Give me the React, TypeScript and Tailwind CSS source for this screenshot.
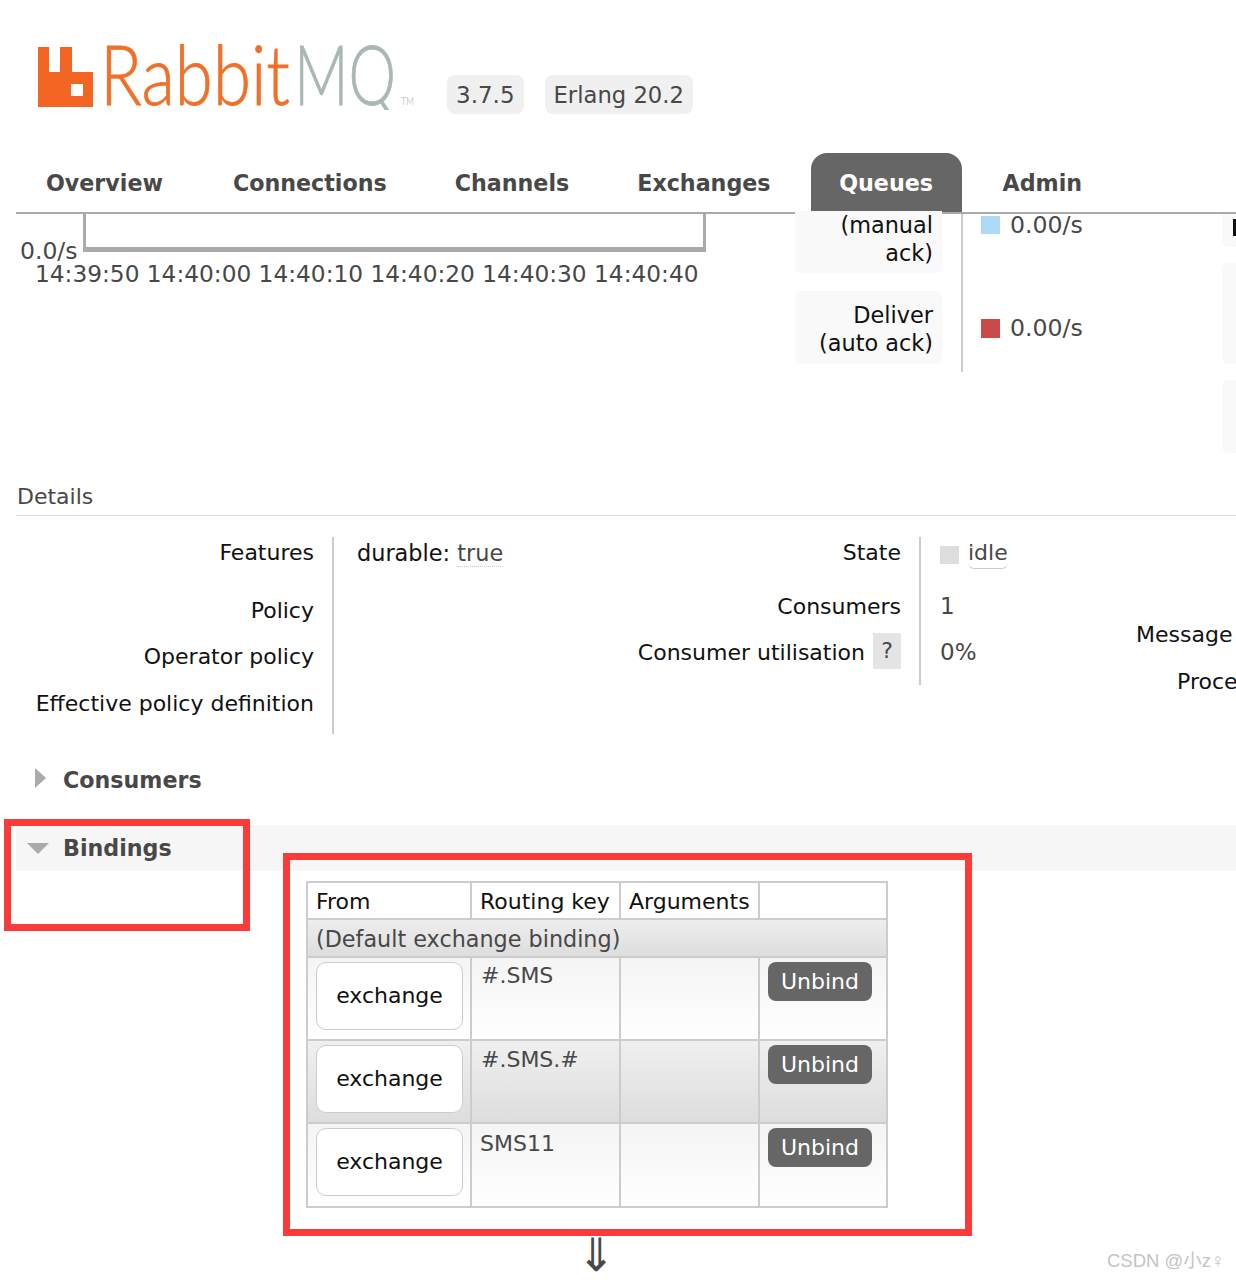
export default function App() {
  const unbind = "rounded-[8px] bg-[#666] text-white px-[13px] h-[39px] flex items-center";
  const exch = "w-[147px] h-[68px] rounded-[10px] border border-[#ccc] bg-white flex items-center justify-center text-[#111]";
  const th = "border-2 border-[#ccc] bg-white text-left font-normal text-[#111] px-[8px] pt-[3px] h-[37px] align-middle whitespace-nowrap";
  const td = "border-2 border-[#ccc] align-top text-[#484848]";
  const rows = [
    { key: "#.SMS", bg: "bg-gradient-to-b from-[#f4f4f4] to-[#ffffff]", h: "h-[83px]", pl: "pl-[9px]", pt: "pt-[4px]" },
    { key: "#.SMS.#", bg: "bg-gradient-to-b from-[#f0f0f0] to-[#dddddd]", h: "h-[83px]", pl: "pl-[9px]", pt: "pt-[5px]" },
    { key: "SMS11", bg: "bg-gradient-to-b from-[#f4f4f4] to-[#ffffff]", h: "h-[84px]", pl: "pl-[8px]", pt: "pt-[6px]" },
  ];
  return (
    <div className="relative w-[1236px] h-[1280px] overflow-hidden bg-white font-['DejaVu_Sans',sans-serif] text-[22px] leading-[28px] text-[#484848]">
      {/* header */}
      <header className="h-[153px] flex items-start">
        <svg className="ml-[38px] mt-[44px] shrink-0" width="380" height="66" viewBox="0 0 380 66">
          <path fillRule="evenodd" fill="#f26522" d="M0 3H11V28H22V3H34V28H55V63H0ZM33 40V52H45V40Z" />
          <text x="62" y="61" fontFamily="Lato, sans-serif" fontWeight="300" fontSize="82" fill="#f0702a" stroke="#f0702a" strokeWidth="0.8" textLength="190" lengthAdjust="spacingAndGlyphs">Rabbit</text>
          <text x="256" y="61" fontFamily="Lato, sans-serif" fontWeight="300" fontSize="82" fill="#a9b8b2" stroke="#a9b8b2" strokeWidth="0.8" textLength="102" lengthAdjust="spacingAndGlyphs">MQ</text>
          <text x="363" y="61" fontFamily="Lato, sans-serif" fontSize="11" fill="#c8d0cc" textLength="13" lengthAdjust="spacingAndGlyphs">TM</text>
        </svg>
        <div className="ml-[29px] mt-[75px] h-[39px] px-[9px] rounded-[8px] bg-[#f0f0f0] flex items-center text-[23px]">3.7.5</div>
        <div className="ml-[21px] mt-[75px] h-[39px] px-[9px] rounded-[8px] bg-[#f0f0f0] flex items-center text-[22.7px]">Erlang 20.2</div>
      </header>

      {/* nav */}
      <nav className="ml-[16px] h-[61px] border-b-2 border-[#aaa] flex items-stretch font-bold text-[22.2px]">
        <div className="ml-[30px] flex items-center">Overview</div>
        <div className="ml-[70px] flex items-center">Connections</div>
        <div className="ml-[68px] flex items-center">Channels</div>
        <div className="ml-[68px] flex items-center">Exchanges</div>
        <div className="ml-[40px] w-[151px] flex items-center justify-center rounded-t-[16px] bg-[#666] text-white">Queues</div>
        <div className="ml-[41px] flex items-center">Admin</div>
      </nav>

      {/* charts strip */}
      <section className="h-[300px] flex items-start">
        <div className="w-[795px] shrink-0 pl-[20px]">
          <div className="flex items-end">
            <span className="mb-[-13px] text-[23.5px]">0.0/s</span>
            <div className="ml-[5px] w-[623px] h-[38px] border-x-[3px] border-b-[5px] border-[#aaa]" />
          </div>
          <div className="ml-[15px] mt-[8px] whitespace-nowrap text-[23.25px]">14:39:50 14:40:00 14:40:10 14:40:20 14:40:30 14:40:40</div>
        </div>
        <div className="w-[168px] shrink-0 h-[158px] border-r-2 border-[#ccc] pr-[19px] flex flex-col text-right text-[#111] text-[22.4px]">
          <div className="h-[62px] mt-[-1px] rounded-b-[6px] bg-[#f9f9f9] pr-[9px] -translate-y-[2px]">(manual<br />ack)</div>
          <div className="mt-[16px] h-[73px] rounded-[6px] bg-[#f9f9f9] pr-[9px] pt-[10px]">Deliver<br />(auto ack)</div>
        </div>
        <div className="w-[259px] shrink-0 pl-[18px] -mt-[3px] text-[23.6px]">
          <div className="flex items-center gap-[10px]"><span className="w-[19px] h-[18px] bg-[#aedaf7]" />0.00/s</div>
          <div className="mt-[75px] flex items-center gap-[10px]"><span className="w-[19px] h-[19px] bg-[#c94a4a]" />0.00/s</div>
        </div>
        <div className="w-[14px] shrink-0 flex flex-col">
          <div className="h-[33px] rounded-bl-[6px] bg-[#f9f9f9] pt-[5px]"><span className="block ml-[11px] w-[3px] h-[17px] bg-[#111]" /></div>
          <div className="mt-[16px] h-[101px] rounded-l-[6px] bg-[#f9f9f9]" />
          <div className="mt-[16px] h-[73px] rounded-l-[6px] bg-[#f9f9f9]" />
        </div>
      </section>

      {/* details */}
      <div className="ml-[16px] mt-[-31px] h-[33px] border-b border-[#ddd] pl-px">Details</div>

      <section className="mt-[21px] flex items-start h-[197px] text-[#111]">
        <div className="w-[334px] shrink-0 h-[197px] border-r-2 border-[#ccc] pr-[18px] text-right">
          <div className="pt-[2px]">Features</div>
          <div className="mt-[30px]">Policy</div>
          <div className="mt-[18px]">Operator policy</div>
          <div className="mt-[19px]">Effective policy definition</div>
        </div>
        <div className="ml-[23px] w-[229px] shrink-0 pt-[2px] text-[22.4px]">
          durable: <span className="text-[#484848] border-b border-dotted border-[#ccc]">true</span>
        </div>
        <div className="w-[335px] shrink-0 h-[148px] border-r-2 border-[#ccc] pr-[18px] text-right">
          <div className="pt-[2px]">State</div>
          <div className="mt-[26px]">Consumers</div>
          <div className="mt-[12px] flex justify-end items-center gap-[8px]"><span className="pt-[3px]">Consumer utilisation</span><span className="w-[28px] h-[36px] bg-[#e4e4e4] flex items-center justify-center text-[#484848]">?</span></div>
        </div>
        <div className="ml-[19px] w-[197px] shrink-0 text-[#484848]">
          <div className="pt-[3px] flex items-center gap-[9px]"><span className="w-[19px] h-[18px] bg-[#ddd]" /><span className="border-b border-[#ccc] rounded-b-[6px] pb-[2px] leading-[26px]">idle</span></div>
          <div className="mt-[23px] text-[23px]">1</div>
          <div className="mt-[18px] text-[23px]">0%</div>
        </div>
        <div className="shrink-0 whitespace-nowrap pt-[84px] text-left w-[96px]">
          <div className="-ml-px">Message</div>
          <div className="mt-[19px] pl-[40px]">Process</div>
        </div>
      </section>

      {/* sections */}
      <div className="mt-[32px] ml-[35px] h-[28px] flex items-center font-bold text-[22.2px]">
        <span className="w-0 h-0 border-y-[10px] border-y-transparent border-l-[11px] border-l-[#aaa] mt-[-4px]" />
        <span className="ml-[17px]">Consumers</span>
      </div>
      <div className="mt-[31px] ml-[16px] h-[46px] bg-[#f6f6f6] flex items-center font-bold text-[22.2px]">
        <span className="ml-[11px] w-0 h-0 border-x-[11px] border-x-transparent border-t-[11px] border-t-[#aaa]" />
        <span className="ml-[14px]">Bindings</span>
      </div>

      <table className="ml-[306px] mt-[10px] w-[580px] table-fixed border-collapse">
        <colgroup>
          <col className="w-[164px]" /><col className="w-[149px]" /><col className="w-[139px]" /><col className="w-[128px]" />
        </colgroup>
        <thead>
          <tr>
            <th className={th}>From</th><th className={th}>Routing key</th><th className={th}>Arguments</th><th className={th}></th>
          </tr>
        </thead>
        <tbody>
          <tr className="bg-gradient-to-b from-[#eeeeee] to-[#dddddd]">
            <td colSpan={4} className="border-2 border-[#ccc] h-[38px] px-[8px] pt-[1px] align-middle text-[#484848] text-[22.3px]">(Default exchange binding)</td>
          </tr>
          {rows.map((r) => (
            <tr key={r.key} className={`${r.bg} ${r.h}`}>
              <td className={`${td} pl-[8px] pt-[4px]`}><div className={exch}>exchange</div></td>
              <td className={`${td} ${r.pl} ${r.pt}`}>{r.key}</td>
              <td className={td}></td>
              <td className={`${td} pl-[8px] pt-[4px]`}><div className={`${unbind} w-fit`}>Unbind</div></td>
            </tr>
          ))}
        </tbody>
      </table>

      <div className="ml-[577px] mt-[27px] text-[46px] leading-[40px]">⇓</div>

      {/* annotations lying over the page */}
      <div className="absolute left-[4px] top-[819px] w-[246px] h-[112px] border-[7px] border-[#fb3a3a]" />
      <div className="absolute left-[283px] top-[853px] w-[689px] h-[383px] border-[7px] border-[#fb3a3a]" />
      <div className="absolute left-[1107px] top-[1250px] text-[18.5px] leading-[22px] text-[#c4c4c4] font-['Liberation_Sans','Noto_Sans_CJK_SC',sans-serif] whitespace-nowrap">CSDN @小z♀</div>
    </div>
  );
}
